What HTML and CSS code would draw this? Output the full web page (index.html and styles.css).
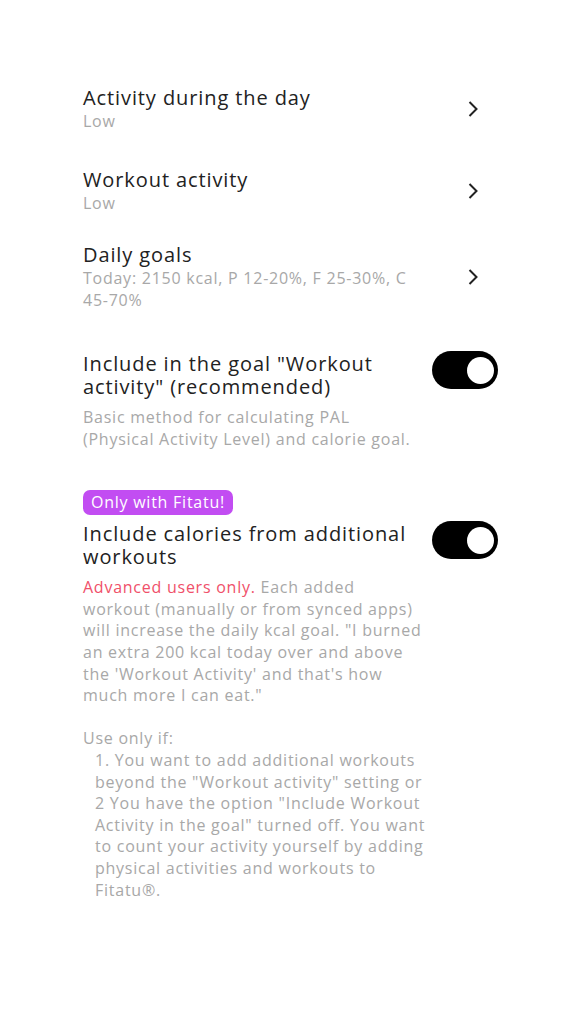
FILE: index.html
```html
<!DOCTYPE html>
<html>
<head>
<meta charset="utf-8">
<link rel="stylesheet" href="styles.css">
</head>
<body>
<div class="page">
  <div class="row r1">
    <div class="text">
      <div class="title">Activity during the day</div>
      <div class="sub">Low</div>
    </div>
    <svg class="chev" width="12" height="18" viewBox="0 0 12 18"><path d="M2.5 2 L9.5 9 L2.5 16" fill="none" stroke="#222" stroke-width="2"/></svg>
  </div>
  <div class="row r2">
    <div class="text">
      <div class="title">Workout activity</div>
      <div class="sub">Low</div>
    </div>
    <svg class="chev" width="12" height="18" viewBox="0 0 12 18"><path d="M2.5 2 L9.5 9 L2.5 16" fill="none" stroke="#222" stroke-width="2"/></svg>
  </div>
  <div class="row r3">
    <div class="text">
      <div class="title">Daily goals</div>
      <div class="sub">Today: 2150 kcal, P <span class="nw">12-20%</span>, F <span class="nw">25-30%</span>, C <span class="nw">45-70%</span></div>
    </div>
    <svg class="chev" width="12" height="18" viewBox="0 0 12 18"><path d="M2.5 2 L9.5 9 L2.5 16" fill="none" stroke="#222" stroke-width="2"/></svg>
  </div>

  <div class="tog-section first">
    <div class="tog-head">
      <div class="title tog-title">Include in the goal "Workout activity" (recommended)</div>
      <div class="toggle"><div class="knob"></div></div>
    </div>
    <div class="desc">Basic method for calculating PAL<br>(Physical Activity Level) and calorie goal.</div>
  </div>

  <div class="tog-section second">
    <div class="badge">Only with Fitatu!</div>
    <div class="tog-head">
      <div class="title tog-title">Include calories from additional workouts</div>
      <div class="toggle"><div class="knob"></div></div>
    </div>
    <div class="desc"><span class="red">Advanced users only.</span> Each added<br>workout (manually or from synced apps)<br>will increase the daily kcal goal. "I burned<br>an extra 200 kcal today over and above<br>the 'Workout Activity' and that's how<br>much more I can eat."</div>
    <div class="desc use">Use only if:</div>
    <div class="desc list">1. You want to add additional workouts<br>beyond the "Workout activity" setting or<br>2 You have the option "Include Workout<br>Activity in the goal" turned off. You want<br>to count your activity yourself by adding<br>physical activities and workouts to<br>Fitatu®.</div>
  </div>
</div>
</body>
</html>
```
FILE: styles.css
```css
html, body {
  margin: 0;
  padding: 0;
  background: #fff;
}
body {
  font-family: "Open Sans", "Liberation Sans", sans-serif;
  color: #222;
}
.page {
  padding: 86px 78px 0 83px;
}
.row {
  display: flex;
  align-items: center;
  justify-content: space-between;
}
.row.r2 { margin-top: 36px; }
.row.r3 { margin-top: 29px; }
.row .text {
  flex: 1;
  max-width: 365px;
}
.nw {
  white-space: nowrap;
}
.title {
  font-size: 20px;
  line-height: 24px;
  letter-spacing: 0.9px;
  color: #222;
}
.sub {
  font-size: 16px;
  line-height: 22px;
  letter-spacing: 0.75px;
  color: #a8a8a8;
}
.chev {
  flex: none;
  margin-right: 19px;
}
.tog-section.first {
  margin-top: 41px;
}
.tog-section.second {
  margin-top: 40px;
}
.tog-head {
  display: flex;
  align-items: flex-start;
  justify-content: space-between;
}
.tog-title {
  max-width: 335px;
  line-height: 23px;
}
.toggle {
  flex: none;
  width: 66px;
  height: 38px;
  border-radius: 19px;
  background: #000;
  margin-top: -1px;
  display: flex;
  align-items: center;
  justify-content: flex-end;
  box-sizing: border-box;
  padding-right: 4px;
}
.knob {
  width: 27px;
  height: 27px;
  border-radius: 50%;
  background: #fff;
}
.desc {
  font-size: 16px;
  line-height: 21.6px;
  letter-spacing: 0.75px;
  color: #a8a8a8;
  margin-top: 9px;
  max-width: 400px;
  white-space: nowrap;
}
.red {
  color: #f0506a;
}
.badge {
  display: inline-block;
  vertical-align: top;
  background: #c24df2;
  color: #fff;
  font-size: 16px;
  line-height: 25px;
  letter-spacing: 0.75px;
  padding: 0 8px;
  border-radius: 7px;
  margin-bottom: 7px;
}
.use {
  margin-top: 21.6px;
}
.list {
  margin-top: 0;
  padding-left: 12px;
  max-width: 388px;
}
```
